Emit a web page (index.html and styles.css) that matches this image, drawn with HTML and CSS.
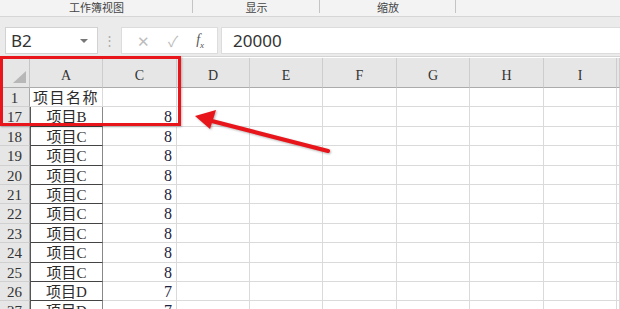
FILE: index.html
```html
<!DOCTYPE html>
<html lang="zh-CN">
<head>
  <meta charset="UTF-8" />
  <title>工作表</title>
  <link rel="stylesheet" href="styles.css">
</head>
<body>

<!-- 功能区分组 -->
<div class="ribbon">
  <div class="group g1">工作簿视图</div>
  <div class="group g2">显示</div>
  <div class="group g3">缩放</div>
  <div class="group g4"></div>
</div>

<!-- 编辑栏 -->
<div class="formula-bar">
  <div class="name-box">
    <span>B2</span>
    <span class="caret"></span>
  </div>
  <div class="grip">⋮</div>
  <div class="fx-buttons">
    <span class="btn">✕</span>
    <span class="btn">✓</span>
    <span class="btn fx">f<sub>x</sub></span>
  </div>
  <div class="formula-input">20000</div>
</div>

<!-- 表格 -->
<div class="sheet" id="sheet"></div>

<!-- 标注 -->
<div class="mark-box"></div>
<svg class="mark-arrow" width="620" height="309" viewBox="0 0 620 309">
  <line x1="328" y1="151" x2="208" y2="120" stroke="#e8151b" stroke-width="4" stroke-linecap="round" />
  <polygon points="195,116 216,110 210,129" fill="#e8151b" />
</svg>

<script>
  const cols = ['A', 'C', 'D', 'E', 'F', 'G', 'H', 'I', ''];
  const rows = [
    { n: 1, a: '项目名称', c: '' },
    { n: 17, a: '项目B', c: '8' },
    { n: 18, a: '项目C', c: '8' },
    { n: 19, a: '项目C', c: '8' },
    { n: 20, a: '项目C', c: '8' },
    { n: 21, a: '项目C', c: '8' },
    { n: 22, a: '项目C', c: '8' },
    { n: 23, a: '项目C', c: '8' },
    { n: 24, a: '项目C', c: '8' },
    { n: 25, a: '项目C', c: '8' },
    { n: 26, a: '项目D', c: '7' },
    { n: 27, a: '项目D', c: '7' }
  ];

  let html = '<div class="corner"><span class="tri"></span></div>';
  cols.forEach(c => {
    html += `<div class="col-head">${c}</div>`;
  });

  rows.forEach(r => {
    const boxed = r.n > 1 ? ' boxed' : '';
    const title = r.n === 1 ? ' title' : '';
    html += `<div class="row-head">${r.n}</div>`;
    html += `<div class="cell col-a${boxed}${title}">${r.a}</div>`;
    html += `<div class="cell col-c">${r.c}</div>`;
    for (let i = 0; i < 7; i++) html += '<div class="cell"></div>';
  });

  document.getElementById('sheet').innerHTML = html;
</script>

</body>
</html>
```

FILE: styles.css
```css
* {
  box-sizing: border-box;
}

html, body {
  margin: 0;
  width: 620px;
  height: 309px;
  overflow: hidden;
}

body {
  position: relative;
  background: #fff;
  font-family: "Noto Sans", "Noto Sans CJK SC", sans-serif;
  color: #333;
}

/* 功能区 */
.ribbon {
  display: flex;
  height: 17px;
  background: #f3f3f3;
  border-bottom: 1px solid #d6d6d6;
}

.ribbon .group {
  font-size: 11px;
  line-height: 15px;
  text-align: center;
  color: #444;
  position: relative;
}

.ribbon .group::after {
  content: "";
  position: absolute;
  right: 0;
  top: 0;
  height: 13px;
  border-right: 1px solid #c4c4c4;
}

.ribbon .g1 { width: 193px; }
.ribbon .g2 { width: 127px; }
.ribbon .g3 { width: 136px; }
.ribbon .g4 { flex: 1; }
.ribbon .g4::after { display: none; }

/* 编辑栏 */
.formula-bar {
  display: flex;
  align-items: stretch;
  height: 40px;
  padding: 10px 0 2px 5px;
  background: #ebebeb;
  border-bottom: 1px solid #d4d4d4;
}

.name-box {
  width: 93px;
  background: #fff;
  border: 1px solid #d2d2d2;
  display: flex;
  align-items: center;
  justify-content: space-between;
  padding: 0 9px 0 5px;
  font-size: 17px;
}

.name-box .caret {
  width: 0;
  height: 0;
  border-left: 4px solid transparent;
  border-right: 4px solid transparent;
  border-top: 4px solid #777;
}

.grip {
  width: 23px;
  text-align: center;
  color: #aaa;
  font-size: 13px;
  line-height: 27px;
}

.fx-buttons {
  width: 97px;
  background: #fff;
  border: 1px solid #dcdcdc;
  display: flex;
  align-items: center;
  justify-content: space-around;
  padding: 0 4px 0 6px;
}

.fx-buttons .btn {
  color: #bdbdbd;
  font-size: 15px;
}

.fx-buttons .fx {
  color: #555;
  font-family: "Liberation Serif", serif;
  font-style: italic;
  font-size: 14px;
}

.fx-buttons .fx sub {
  font-size: 9px;
}

.formula-input {
  flex: 1;
  margin-left: 3px;
  background: #fff;
  border: 1px solid #dcdcdc;
  border-right: none;
  font-size: 17px;
  line-height: 25px;
  padding-left: 11px;
}

/* 表格 */
.sheet {
  display: grid;
  grid-template-columns: 30px 73px 74px 73px 73px 74px 73px 74px 73px 1fr;
  grid-template-rows: 30px;
  grid-auto-rows: 19.4px;
  margin-top: 1px;
  font-family: "Liberation Serif", "Noto Sans CJK SC", serif;
}

.corner,
.col-head,
.row-head {
  background: #e6e6e6;
  color: #333;
}

.corner {
  position: relative;
  border-right: 1px solid #c6c6c6;
  border-bottom: 1px solid #ababab;
}

.corner .tri {
  position: absolute;
  right: 3px;
  bottom: 4px;
  width: 0;
  height: 0;
  border-left: 13px solid transparent;
  border-bottom: 12px solid #b7b7b7;
}

.col-head {
  border-right: 1px solid #cdcdcd;
  border-bottom: 1px solid #ababab;
  text-align: center;
  font-size: 14px;
  padding-top: 10px;
}

.row-head {
  border-right: 1px solid #ababab;
  border-bottom: 1px solid #d0d0d0;
  text-align: center;
  font-size: 15px;
  line-height: 20px;
}

.cell {
  border-right: 1px solid #dadada;
  border-bottom: 1px solid #dadada;
  font-size: 15px;
  line-height: 20px;
  white-space: nowrap;
  color: #2b2b2b;
}

.col-a {
  text-align: center;
}

.col-a.title {
  letter-spacing: 1.5px;
  overflow: visible;
}

.col-a.boxed {
  border-left: 1px solid #555;
  border-right: 1px solid #888;
  border-bottom: 1px solid #444;
}

.col-c {
  text-align: right;
  padding-right: 4px;
  font-size: 16px;
  color: #1e2340;
}

/* 标注 */
.mark-box {
  position: absolute;
  left: 0;
  top: 56px;
  width: 181px;
  height: 70px;
  border: 3px solid #e8151b;
  box-shadow: 1px 1px 2px rgba(0, 0, 0, 0.25);
}

.mark-arrow {
  position: absolute;
  left: 0;
  top: 0;
  pointer-events: none;
  filter: drop-shadow(1px 1px 1px rgba(0, 0, 0, 0.3));
}
```
